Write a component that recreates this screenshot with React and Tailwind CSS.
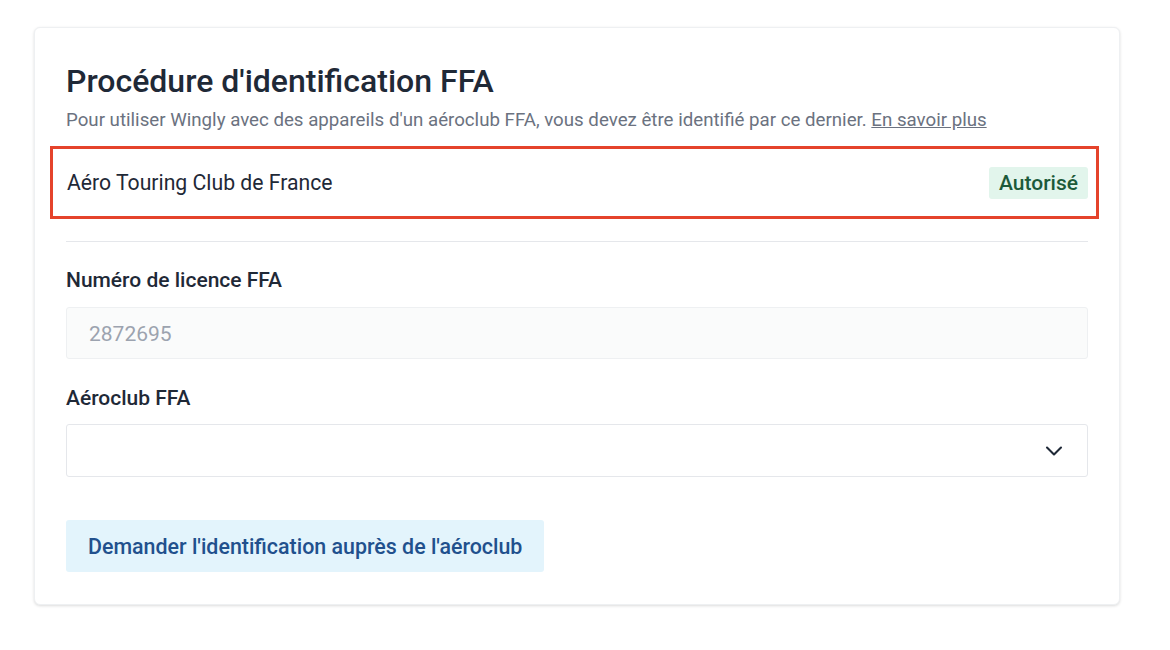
import { ChevronDown } from "lucide-react";

const App = () => {
  return (
    <div className="min-h-[650px] bg-white pt-[27px] px-[34px] font-['Roboto',sans-serif]">
      <div className="w-[1086px] rounded-md border border-[#eef0f2] bg-white px-[31px] pt-[34px] pb-[32px] shadow-[0_1px_3px_rgba(0,0,0,0.14)]">
        <h1 className="text-[32px] leading-[38px] font-medium text-[#1f2937]">
          Procédure d'identification FFA
        </h1>
        <p className="mt-[8px] text-[18.7px] leading-[24px] text-[#6b7280]">
          Pour utiliser Wingly avec des appareils d'un aéroclub FFA, vous devez être identifié par ce dernier.{" "}
          <a href="#" className="underline">En savoir plus</a>
        </p>

        <div className="mt-[14px] -ml-[16px] -mr-[11px] flex h-[73px] items-center justify-between border-[3px] border-[#e5432b] pl-[14px] pr-[8px]">
          <span className="text-[21.2px] text-[#1f2937]">Aéro Touring Club de France</span>
          <span className="rounded-[3px] bg-[#e2f5ec] px-[10px] py-[2px] text-[21px] font-medium leading-[28px] text-[#1c5a3a]">
            Autorisé
          </span>
        </div>

        <div className="mt-[22px] border-t border-[#e5e7eb]" />

        <label className="mt-[24px] block text-[21px] leading-[28px] font-medium text-[#1f2937]">
          Numéro de licence FFA
        </label>
        <div className="mt-[13px] flex h-[52px] items-center rounded-[3px] border border-[#eef0f2] bg-[#fafbfb] px-[22px] pt-[3px] text-[21px] text-[#9ca3af]">
          2872695
        </div>

        <label className="mt-[25px] block text-[21px] leading-[28px] font-medium text-[#1f2937]">
          Aéroclub FFA
        </label>
        <div className="mt-[12px] flex h-[53px] items-center justify-end rounded-[3px] border border-[#e5e7eb] bg-white pr-[19px]">
          <ChevronDown className="h-[28px] w-[28px] text-[#1f2937]" strokeWidth={1.8} />
        </div>

        <button className="mt-[43px] flex h-[52px] items-center rounded-[3px] bg-[#e3f4fc] px-[22px] pt-[3px] text-[21.4px] font-medium text-[#21508d]">
          Demander l'identification auprès de l'aéroclub
        </button>
      </div>
    </div>
  );
};

export default App;
